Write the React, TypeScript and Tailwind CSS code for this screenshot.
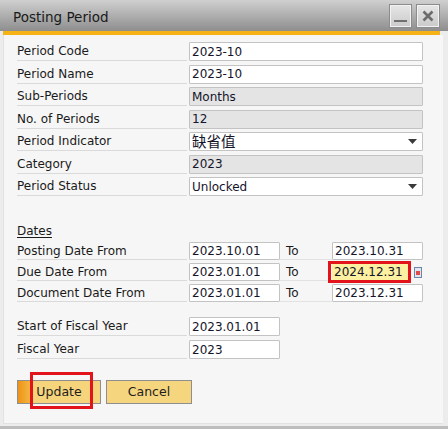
import type { ReactNode } from "react";

function Field({
  value,
  width,
  disabled,
  dropdown,
  cjk,
  h = "h-[19px]",
}: {
  value: string;
  width: string;
  disabled?: boolean;
  dropdown?: boolean;
  cjk?: boolean;
  h?: string;
}) {
  return (
    <div
      className={`${width} ${h} flex items-center border border-[#c3c3c3] rounded-[1px] px-[2px] text-[#14142a] ${
        disabled ? "bg-[#e4e4e4]" : "bg-white"
      }`}
    >
      <span
        className={
          cjk
            ? "font-['Noto_Sans_CJK_SC',sans-serif] text-[14.5px] leading-none"
            : "leading-none"
        }
      >
        {value}
      </span>
      {dropdown && (
        <svg className="ml-auto mr-[3px]" width="9" height="5" viewBox="0 0 9 5">
          <polygon points="0,0 9,0 4.5,5" fill="#3a3a3a" />
        </svg>
      )}
    </div>
  );
}

function Label({ children, h = "h-[19px]" }: { children: ReactNode; h?: string }) {
  return (
    <div className={`w-[170px] ${h} flex items-center border-b border-[#dadada] text-[#1a1a1a] leading-none`}>
      {children}
    </div>
  );
}

function ToCell() {
  return (
    <div className="w-[52px] h-[18px] flex items-center pl-[6px] border-b border-[#e2e2e2] text-[#1a1a1a] leading-none">
      To
    </div>
  );
}

export default function App() {
  const top = [
    { label: "Period Code", value: "2023-10" },
    { label: "Period Name", value: "2023-10" },
    { label: "Sub-Periods", value: "Months", disabled: true },
    { label: "No. of Periods", value: "12", disabled: true },
    { label: "Period Indicator", value: "缺省值", dropdown: true, cjk: true },
    { label: "Category", value: "2023", disabled: true },
    { label: "Period Status", value: "Unlocked", dropdown: true },
  ];

  return (
    <div className="w-[448px] h-[429px] bg-[#ececec] overflow-hidden font-['DejaVu_Sans',sans-serif] text-[12px]">
      {/* title bar */}
      <div className="h-[31px] flex items-center justify-between pl-[13px] pr-[8px] bg-gradient-to-b from-[#d0d0d0] to-[#8e8e8e]">
        <span className="pt-[4px] text-[13.5px] text-[#1a1a1a] leading-none">Posting Period</span>
        <div className="flex gap-[4px]">
          <div className="w-[23px] h-[24px] flex items-end justify-center pb-[5px] border border-[#8c8c8c] bg-gradient-to-b from-[#e6e6e6] to-[#cacaca] shadow-[inset_0_0_0_1px_#f2f2f2]">
            <div className="w-[13px] h-[2px] bg-[#707070]" />
          </div>
          <div className="w-[24px] h-[24px] flex items-center justify-center border border-[#8c8c8c] bg-gradient-to-b from-[#e6e6e6] to-[#cacaca] shadow-[inset_0_0_0_1px_#f2f2f2]">
            <svg width="12" height="12" viewBox="0 0 12 12">
              <path d="M1.5 1.5 L10.5 10.5 M10.5 1.5 L1.5 10.5" stroke="#6c6c6c" strokeWidth="2.6" />
            </svg>
          </div>
        </div>
      </div>
      <div className="ml-[3px] mr-[8px] h-[4px] bg-[#f5b318]" />

      {/* body */}
      <div className="ml-[3px] mr-[5px] h-[389px] bg-[#f6f6f6] border-l border-b border-[#e2e2e2] pl-[13px] pt-[7px]">
        <div className="flex flex-col gap-[3.5px]">
          {top.map((r) => (
            <div key={r.label} className="flex gap-[2px]">
              <Label>{r.label}</Label>
              <Field
                value={r.value}
                width="w-[234px]"
                disabled={r.disabled}
                dropdown={r.dropdown}
                cjk={r.cjk}
              />
            </div>
          ))}
        </div>

        <div className="mt-[26px] h-[18px] flex items-center text-[#1a1a1a]">
          <span className="underline underline-offset-[2px] leading-none">Dates</span>
        </div>

        <div className="mt-[2px] flex flex-col gap-[3px]">
          <div className="flex">
            <Label h="h-[18px]">Posting Date From</Label>
            <div className="w-[2px]" />
            <Field value="2023.10.01" width="w-[91px]" h="h-[18px]" />
            <ToCell />
            <Field value="2023.10.31" width="w-[91px]" h="h-[18px]" />
          </div>
          <div className="flex">
            <Label h="h-[18px]">Due Date From</Label>
            <div className="w-[2px]" />
            <Field value="2023.01.01" width="w-[91px]" h="h-[18px]" />
            <ToCell />
            <div className="relative">
              <div className="w-[77px] h-[18px] flex items-center px-[2px] bg-[#fdf0a0] text-[#14142a] leading-none">
                2024.12.31
              </div>
              <span className="absolute -left-[4px] -right-[2px] -top-[2px] -bottom-[2px] border-[3px] border-[#e3131b]" />
            </div>
            <div className="ml-[5px] mt-[4px] w-[8px] h-[11px] flex items-center justify-center border border-[#6d86a8] bg-[#dfe6f0]">
              <div className="w-[4px] h-[4px] bg-[#e24a4a]" />
            </div>
          </div>
          <div className="flex">
            <Label h="h-[18px]">Document Date From</Label>
            <div className="w-[2px]" />
            <Field value="2023.01.01" width="w-[91px]" h="h-[18px]" />
            <ToCell />
            <Field value="2023.12.31" width="w-[91px]" h="h-[18px]" />
          </div>
        </div>

        <div className="mt-[15px] flex flex-col gap-[4px]">
          <div className="flex gap-[2px]">
            <Label>Start of Fiscal Year</Label>
            <Field value="2023.01.01" width="w-[91px]" />
          </div>
          <div className="flex gap-[2px]">
            <Label>Fiscal Year</Label>
            <Field value="2023" width="w-[91px]" />
          </div>
        </div>

        <div className="mt-[21px] flex gap-[5px]">
          <div className="relative">
            <button className="w-[84px] h-[24px] border border-[#8e8e8e] text-[12.5px] text-[#1e1e1e] bg-[linear-gradient(to_right,#ee9316_0%,#f4b640_15%,#f5d47c_17%,#f5d47c_100%)]">
              Update
            </button>
            <span className="absolute left-[13px] right-[8px] -top-[8px] -bottom-[5px] border-[3px] border-[#e3131b]" />
          </div>
          <button className="w-[86px] h-[24px] border border-[#8e8e8e] text-[12.5px] text-[#1e1e1e] bg-[#f5d57e]">
            Cancel
          </button>
        </div>
      </div>
      <div className="mt-[2px] h-[3px] bg-[#bdbdbd]" />
    </div>
  );
}
